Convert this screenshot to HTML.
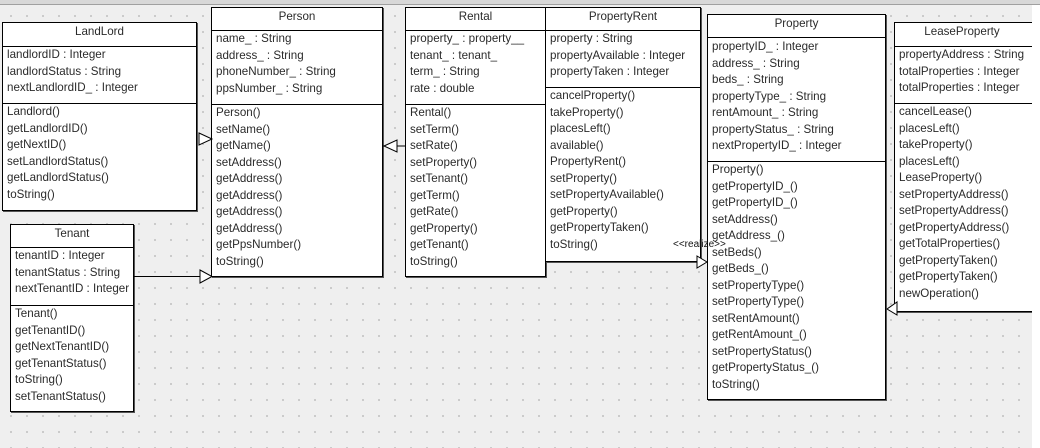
<!DOCTYPE html>
<html><head><meta charset="utf-8"><style>
body{margin:0;width:1040px;height:448px;overflow:hidden;background:#fff;font-family:"Liberation Sans",sans-serif;}
#canvas{position:absolute;left:0;top:5px;width:1032px;height:443px;background-color:#efefef;
background-image:radial-gradient(circle,#c4c4c4 0.8px,transparent 1.2px);background-size:16px 16px;background-position:3px 3px;}
#top{position:absolute;left:0;top:0;width:1040px;height:5px;background:#d8d8d8;border-bottom:1px solid #a0a0a0;box-sizing:border-box}
.b{position:absolute;background:#fff;border:1px solid #000;box-shadow:1px 1px 0 #555;box-sizing:border-box;font-size:11.6px;color:#2a2a2a;}
.h{text-align:center;border-bottom:1px solid #000;box-sizing:border-box;padding-top:2px;}
.s{border-bottom:1px solid #000;box-sizing:border-box;padding:0 0 0 4px;line-height:16.5px;white-space:nowrap}
.m{padding:0 0 0 4px;line-height:16.5px;white-space:nowrap}
svg{position:absolute;left:0;top:0}
</style></head><body>
<div id="top"></div><div id="canvas"></div>

<div class="b" style="left:2px;top:22px;width:195px;height:189px">
<div class="h" style="height:24px">LandLord</div>
<div class="s" style="height:57px">landlordID : Integer<br>landlordStatus : String<br>nextLandlordID_ : Integer</div>
<div class="m">Landlord()<br>getLandlordID()<br>getNextID()<br>setLandlordStatus()<br>getLandlordStatus()<br>toString()</div></div>

<div class="b" style="left:211px;top:7px;width:172px;height:270px">
<div class="h" style="height:23px">Person</div>
<div class="s" style="height:74px">name_ : String<br>address_ : String<br>phoneNumber_ : String<br>ppsNumber_ : String</div>
<div class="m">Person()<br>setName()<br>getName()<br>setAddress()<br>getAddress()<br>getAddress()<br>getAddress()<br>getAddress()<br>getPpsNumber()<br>toString()</div></div>

<div class="b" style="left:10px;top:224px;width:124px;height:188px">
<div class="h" style="height:23px">Tenant</div>
<div class="s" style="height:58px">tenantID : Integer<br>tenantStatus : String<br>nextTenantID : Integer</div>
<div class="m">Tenant()<br>getTenantID()<br>getNextTenantID()<br>getTenantStatus()<br>toString()<br>setTenantStatus()</div></div>

<div class="b" style="left:405px;top:7px;width:141px;height:270px">
<div class="h" style="height:23px">Rental</div>
<div class="s" style="height:74px">property_ : property__<br>tenant_ : tenant_<br>term_ : String<br>rate : double</div>
<div class="m">Rental()<br>setTerm()<br>setRate()<br>setProperty()<br>setTenant()<br>getTerm()<br>getRate()<br>getProperty()<br>getTenant()<br>toString()</div></div>

<div class="b" style="left:545px;top:7px;width:156px;height:255px">
<div class="h" style="height:23px">PropertyRent</div>
<div class="s" style="height:57px">property : String<br>propertyAvailable : Integer<br>propertyTaken : Integer</div>
<div class="m">cancelProperty()<br>takeProperty()<br>placesLeft()<br>available()<br>PropertyRent()<br>setProperty()<br>setPropertyAvailable()<br>getProperty()<br>getPropertyTaken()<br>toString()</div></div>

<div class="b" style="left:707px;top:14px;width:179px;height:386px">
<div class="h" style="height:23px">Property</div>
<div class="s" style="height:124px;padding-top:1px">propertyID_ : Integer<br>address_ : String<br>beds_ : String<br>propertyType_ : String<br>rentAmount_ : String<br>propertyStatus_ : String<br>nextPropertyID_ : Integer</div>
<div class="m">Property()<br>getPropertyID_()<br>getPropertyID_()<br>setAddress()<br>getAddress_()<br>setBeds()<br>getBeds_()<br>setPropertyType()<br>setPropertyType()<br>setRentAmount()<br>getRentAmount_()<br>setPropertyStatus()<br>getPropertyStatus_()<br>toString()</div></div>

<div class="b" style="left:894px;top:22px;width:150px;height:290px">
<div class="h" style="height:24px;padding-right:14px">LeaseProperty</div>
<div class="s" style="height:57px">propertyAddress : String<br>totalProperties : Integer<br>totalProperties : Integer</div>
<div class="m">cancelLease()<br>placesLeft()<br>takeProperty()<br>placesLeft()<br>LeaseProperty()<br>setPropertyAddress()<br>setPropertyAddress()<br>getPropertyAddress()<br>getTotalProperties()<br>getPropertyTaken()<br>getPropertyTaken()<br>newOperation()</div></div>
<div style="position:absolute;left:1032px;top:5px;width:8px;height:443px;background:#fff"></div>

<svg width="1040" height="448" fill="#fff" stroke="#000" stroke-width="1">
<polygon points="199,133 212,139 199,145"/>
<line x1="383" y1="146" x2="406" y2="146"/>
<polygon points="384,146 397,140 397,152"/>
<line x1="134" y1="276.5" x2="200" y2="276.5"/>
<polygon points="200,270 212,276.5 200,283"/>
<polygon points="697,256 707,262 697,268"/>
<line x1="897" y1="309" x2="894" y2="309"/>
<polygon points="887,309 897,302 897,315"/>
<text x="673" y="247" fill="#111" stroke="none" font-size="10" font-family="Liberation Sans">&lt;&lt;realize&gt;&gt;</text>
</svg>
</body></html>
